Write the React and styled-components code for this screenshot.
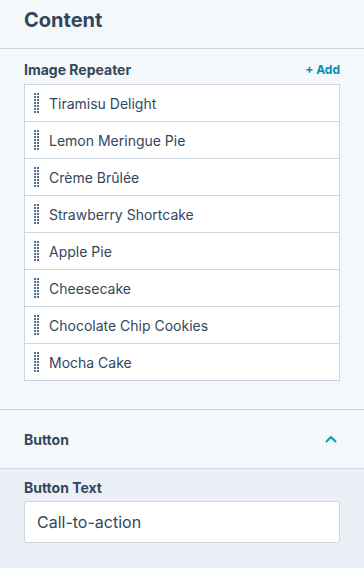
import React from 'react';
import styled, { createGlobalStyle } from 'styled-components';

const colors = {
  text: '#33475b',
  border: '#cbd6e2',
  bg: '#f5f8fa',
  bgDark: '#eaf0f6',
  teal: '#0091ae',
  chevron: '#00a4bd',
  handle: '#516f90',
};

const Global = createGlobalStyle`
  html, body {
    margin: 0;
    padding: 0;
    background: ${colors.bg};
  }
  body {
    font-family: 'Inter', 'Open Sans', sans-serif;
    color: ${colors.text};
  }
`;

const Panel = styled.div`
  width: 364px;
  height: 568px;
  display: flex;
  flex-direction: column;
  background: ${colors.bg};
  overflow: hidden;
`;

const Header = styled.div`
  height: 49px;
  padding: 0 24px;
  border-bottom: 1px solid ${colors.border};
  display: flex;
  align-items: center;
  box-sizing: border-box;
  h1 {
    margin: 0 0 8px;
    font-size: 20px;
    font-weight: 700;
  }
`;

const Section = styled.div`
  padding: 8px 24px 28px;
  border-bottom: 1px solid ${colors.border};
`;

const LabelRow = styled.div`
  display: flex;
  justify-content: space-between;
  align-items: center;
  height: 24px;
  margin-bottom: 3px;
`;

const Label = styled.span`
  font-size: 14px;
  font-weight: 700;
`;

const AddLink = styled.a`
  font-size: 12px;
  font-weight: 700;
  color: ${colors.teal};
  text-decoration: none;
`;

const List = styled.ul`
  margin: 0;
  padding: 0;
  list-style: none;
  border: 1px solid ${colors.border};
  background: #fff;
`;

const Item = styled.li`
  height: 36px;
  display: flex;
  align-items: center;
  gap: 10px;
  padding-left: 9px;
  font-size: 14px;
  & + & {
    border-top: 1px solid ${colors.border};
  }
`;

const Handle = () => (
  <svg width="5" height="21" viewBox="0 0 5 21" style={{ flex: 'none' }} shapeRendering="crispEdges">
    {[0, 3, 6, 9, 12, 15, 18].map((y) => (
      <g key={y} fill={colors.handle}>
        <rect x="0" y={y} width="2" height="2" />
        <rect x="3" y={y} width="2" height="2" />
      </g>
    ))}
  </svg>
);

const Accordion = styled.div`
  height: 58px;
  padding: 0 24px;
  display: flex;
  justify-content: space-between;
  align-items: center;
  border-bottom: 1px solid ${colors.border};
`;

const Body = styled.div`
  flex: 1;
  background: ${colors.bgDark};
  padding: 8px 24px;
`;

const Input = styled.input`
  display: block;
  box-sizing: border-box;
  width: 100%;
  height: 42px;
  margin-top: 4px;
  padding: 0 12px;
  border: 1px solid ${colors.border};
  border-radius: 3px;
  background: #fff;
  font-family: inherit;
  font-size: 16px;
  color: ${colors.text};
  outline: none;
`;

const items = [
  'Tiramisu Delight',
  'Lemon Meringue Pie',
  'Crème Brûlée',
  'Strawberry Shortcake',
  'Apple Pie',
  'Cheesecake',
  'Chocolate Chip Cookies',
  'Mocha Cake',
];

export default function App() {
  return (
    <Panel>
      <Global />
      <Header>
        <h1>Content</h1>
      </Header>
      <Section>
        <LabelRow>
          <Label>Image Repeater</Label>
          <AddLink href="#">+ Add</AddLink>
        </LabelRow>
        <List>
          {items.map((name) => (
            <Item key={name}>
              <Handle />
              {name}
            </Item>
          ))}
        </List>
      </Section>
      <Accordion>
        <Label>Button</Label>
        <svg width="14" height="9" viewBox="0 0 14 9" style={{ marginRight: 2 }}>
          <path d="M2.5 6.5l4.5-4.5 4.5 4.5" fill="none" stroke={colors.chevron} strokeWidth="2" strokeLinecap="round" strokeLinejoin="round" />
        </svg>
      </Accordion>
      <Body>
        <Label>Button Text</Label>
        <Input defaultValue="Call-to-action" />
      </Body>
    </Panel>
  );
}
